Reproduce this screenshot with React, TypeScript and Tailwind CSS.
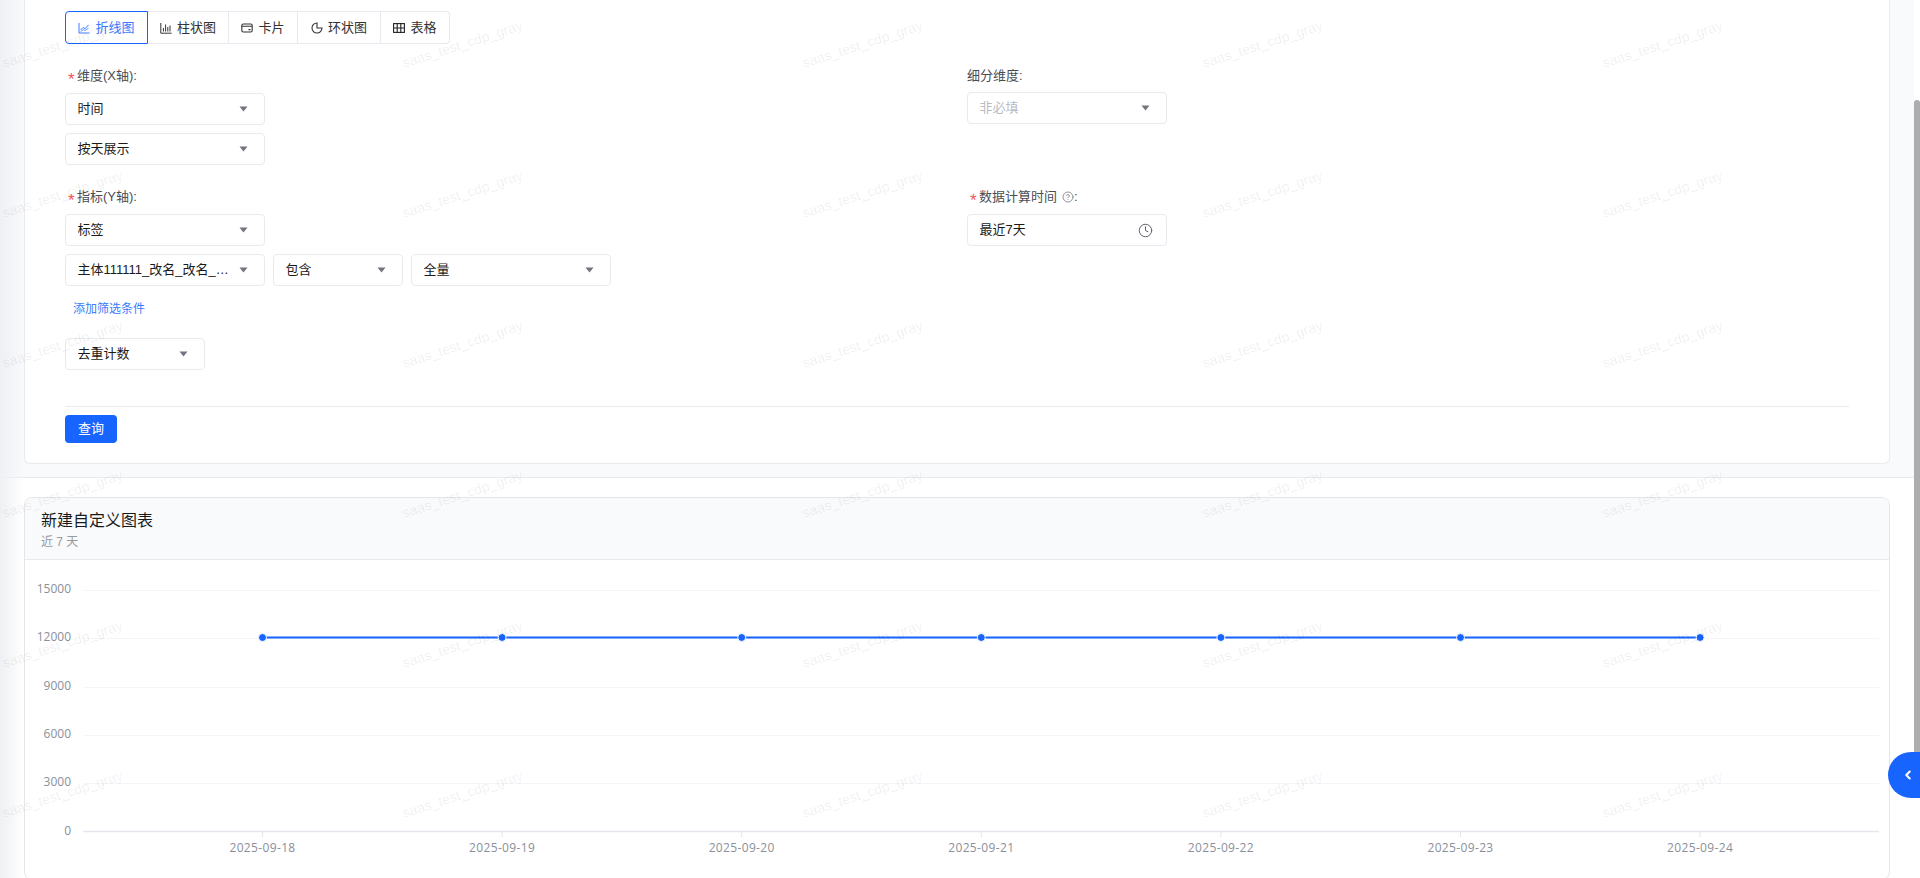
import { ChevronLeft, CircleHelp, Clock } from "lucide-react";
import type { ReactNode } from "react";

const dates = ["2025-09-18", "2025-09-19", "2025-09-20", "2025-09-21", "2025-09-22", "2025-09-23", "2025-09-24"];
const ticks = [
  { label: "15000", y: 30 },
  { label: "12000", y: 78 },
  { label: "9000", y: 127 },
  { label: "6000", y: 175 },
  { label: "3000", y: 223 },
];

function LineIcon() {
  return (
    <svg width="12" height="12" viewBox="0 0 12 12" fill="none" stroke="currentColor" strokeWidth="1">
      <path d="M1 1v10h10.5" />
      <path d="M2.6 8l2.6-2.6 1.8 1.4 3.6-4" />
      <path d="M2.6 9.6l2.6-2 1.8 1 3.6-2.6" strokeWidth="0.8" />
    </svg>
  );
}

function BarIcon() {
  return (
    <svg width="12" height="12" viewBox="0 0 12 12" fill="none" stroke="currentColor" strokeWidth="1">
      <path d="M0.8 1v10.2h10.8" />
      <path d="M3.4 9.5V6M5.6 9.5V2.5M7.8 9.5V5M10 9.5V3.5" />
    </svg>
  );
}

function CardIcon() {
  return (
    <svg width="12" height="12" viewBox="0 0 12 12" fill="none" stroke="currentColor" strokeWidth="1.1">
      <rect x="0.8" y="2" width="10.4" height="8" rx="1.5" />
      <path d="M1 4.2h10M7.5 7.6h2" />
    </svg>
  );
}

function RingIcon() {
  return (
    <svg width="12" height="12" viewBox="0 0 12 12" fill="none" stroke="currentColor" strokeWidth="1.1">
      <path d="M11 6A5 5 0 1 1 6 1v5z" />
    </svg>
  );
}

function TableIcon() {
  return (
    <svg width="12" height="12" viewBox="0 0 12 12" fill="none" stroke="#222" strokeWidth="1.1">
      <rect x="0.6" y="1.6" width="10.8" height="8.8" />
      <path d="M0.6 6h10.8M4.2 1.6v8.8M7.8 1.6v8.8" />
    </svg>
  );
}

function Caret() {
  return (
    <svg width="9" height="6" viewBox="0 0 9 6" className="shrink-0">
      <path d="M0.5 0.5h8L4.5 5.5z" fill="#72757e" />
    </svg>
  );
}

function Tab({ icon, label, width, active }: { icon: ReactNode; label: string; width: string; active?: boolean }) {
  return (
    <div
      className={`flex h-full items-center justify-center gap-[5px] text-[13px] ${width} ${
        active
          ? "rounded-l-[4px] border border-[#1764ff] text-[#3a7bff]"
          : "border-y border-r border-[#e8eaf0] text-[#333] last:rounded-r-[4px]"
      }`}
    >
      {icon}
      <span>{label}</span>
    </div>
  );
}

function Select({
  value,
  width = "w-[200px]",
  placeholder,
  right,
}: {
  value: string;
  width?: string;
  placeholder?: boolean;
  right?: ReactNode;
}) {
  return (
    <div className={`flex h-8 shrink-0 items-center justify-between gap-2 rounded-[4px] border border-[#e8eaf0] bg-white pl-[11.5px] pr-4 text-[13px] ${width}`}>
      <span className={`truncate ${placeholder ? "text-[#b8bbc4]" : "text-[#1a1a1a]"}`}>{value}</span>
      {right ?? <Caret />}
    </div>
  );
}

function Label({ text, required, help }: { text: string; required?: boolean; help?: boolean }) {
  return (
    <div className="flex h-5 items-center text-[13px] text-[#4a4d55]">
      {required && <span className="ml-[3px] mr-[2px] mt-[6px] w-[7px] text-[17px] leading-none text-[#f5535a]">*</span>}
      <span>{text}</span>
      {help && <CircleHelp size={12} strokeWidth={1.6} className="ml-[5px] text-[#77797f]" />}
      {help && <span>:</span>}
    </div>
  );
}

function Chart() {
  return (
    <svg width="1864" height="319" className="block font-['Open_Sans',sans-serif]">
      {ticks.map((t) => (
        <g key={t.label}>
          <line x1="58" x2="1854" y1={t.y + 0.5} y2={t.y + 0.5} stroke="#f4f5f7" />
          <text x="46" y={t.y + 3} textAnchor="end" fontSize="12" fill="#8b8f99">
            {t.label}
          </text>
        </g>
      ))}
      <line x1="58" x2="1854" y1="271.5" y2="271.5" stroke="#e3e6ec" strokeWidth="1.5" />
      <text x="46" y="275" textAnchor="end" fontSize="12" fill="#8b8f99">
        0
      </text>
      <line x1="237.5" x2="1675" y1="77.5" y2="77.5" stroke="#1764ff" strokeWidth="2" />
      {dates.map((d, i) => {
        const x = 237.5 + i * 239.6;
        return (
          <g key={d}>
            <line x1={x} x2={x} y1="272" y2="277" stroke="#e3e6ec" />
            <circle cx={x} cy="77.5" r="4" fill="#1764ff" stroke="#fff" strokeWidth="1" />
            <text x={x} y="292" textAnchor="middle" fontSize="12" letterSpacing="0.35" fill="#8b8f99">
              {d}
            </text>
          </g>
        );
      })}
    </svg>
  );
}

export default function App() {
  return (
    <div className="relative flex h-[878px] w-[1920px] overflow-hidden bg-white font-['Liberation_Sans','Noto_Sans_CJK_SC',sans-serif]">
      <div className="min-w-0 flex-1">
        <div className="border-b border-[#e8eaf3] bg-[#f9fafc] pb-[13px] pl-6 pr-6">
          <div className="rounded-b-[6px] border-x border-b border-[#e8eaf0] bg-white pl-10 pr-10 pt-[11px]">
            <div className="flex h-[33px]">
              <Tab active width="w-[83px]" label="折线图" icon={<LineIcon />} />
              <Tab width="w-[81px]" label="柱状图" icon={<BarIcon />} />
              <Tab width="w-[69px]" label="卡片" icon={<CardIcon />} />
              <Tab width="w-[83px]" label="环状图" icon={<RingIcon />} />
              <Tab width="w-[69px]" label="表格" icon={<TableIcon />} />
            </div>

            <div className="mt-[22px] grid grid-cols-[902px_1fr]">
              <div>
                <Label required text="维度(X轴):" />
                <div className="mt-[7px] flex flex-col gap-2">
                  <Select value="时间" />
                  <Select value="按天展示" />
                </div>
              </div>
              <div>
                <Label text="细分维度:" />
                <div className="mt-[6px]">
                  <Select value="非必填" placeholder />
                </div>
              </div>
            </div>

            <div className="mt-[22px] grid grid-cols-[902px_1fr]">
              <div>
                <Label required text="指标(Y轴):" />
                <div className="mt-[7px] flex flex-col gap-2">
                  <Select value="标签" />
                  <div className="flex gap-2">
                    <Select value="主体111111_改名_改名_改名_改名" />
                    <Select value="包含" width="w-[130px]" />
                    <Select value="全量" />
                  </div>
                </div>
                <div className="mt-[13px] h-5 pl-2 text-[12px] leading-5 text-[#3a7bff]">添加筛选条件</div>
                <div className="mt-[19px]">
                  <Select value="去重计数" width="w-[140px]" />
                </div>
              </div>
              <div>
                <Label required help text="数据计算时间" />
                <div className="mt-[7px]">
                  <Select
                    value="最近7天"
                    right={<Clock size={15} strokeWidth={1.6} className="-mr-[3px] text-[#5f636b]" />}
                  />
                </div>
              </div>
            </div>

            <div className="mt-9 border-t border-[#e8eaf0] pb-5 pt-2">
              <button className="flex h-7 w-[52px] items-center justify-center rounded-[4px] bg-[#1764ff] text-[13px] text-white">
                查询
              </button>
            </div>
          </div>
        </div>

        <div className="pl-6 pr-6 pt-[19px]">
          <div className="overflow-hidden rounded-[8px] border border-[#e4e6ea] bg-white">
            <div className="h-[62px] border-b border-[#e8eaf0] bg-[#f9fafc] pl-4 pt-[11px]">
              <div className="text-base leading-6 text-[#1a1a1a]">新建自定义图表</div>
              <div className="text-[12px] leading-[18px] text-[#999]">近 7 天</div>
            </div>
            <Chart />
          </div>
        </div>
      </div>

      <div className="w-[6px] shrink-0 pt-[100px]">
        <div className="h-[675px] rounded-t-[3px] bg-[#adadad]" />
      </div>

      <div className="pointer-events-none absolute inset-y-0 left-0 w-6 bg-gradient-to-r from-[#eef0f3] to-transparent" />

      <div className="absolute right-0 top-[752px] flex h-[46px] w-8 items-center justify-center rounded-l-[23px] bg-[#1764ff] pl-[8px] text-white">
        <ChevronLeft size={14} strokeWidth={3.5} />
      </div>

      <div className="pointer-events-none absolute inset-0 grid grid-cols-[repeat(5,400px)] auto-rows-[150px] overflow-hidden">
        {Array.from({ length: 30 }).map((_, i) => (
          <div key={i} className="pt-[35px]">
            <div className="w-[118px] -rotate-[18deg] whitespace-nowrap font-['Liberation_Sans',sans-serif] text-[14px] leading-5 text-black/[0.07]">
              saas_test_cdp_gray
            </div>
          </div>
        ))}
      </div>
    </div>
  );
}
